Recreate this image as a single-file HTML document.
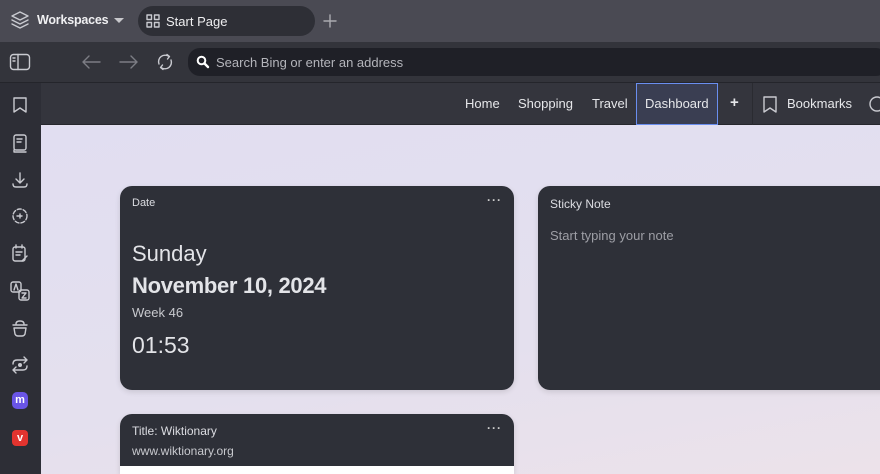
<!DOCTYPE html>
<html><head><style>
*{margin:0;padding:0;box-sizing:border-box}
html,body{width:880px;height:474px;overflow:hidden}
body{font-family:"Liberation Sans",sans-serif;background:#e3dfef;position:relative}
.abs{position:absolute}
svg{position:absolute;fill:none;stroke:#c9cad0;stroke-width:1.4;stroke-linecap:round;stroke-linejoin:round}
.card{position:absolute;background:#2e3038;border-radius:12px;color:#e3e4e8;box-shadow:0 2px 6px rgba(0,0,0,.12)}
.t{position:absolute;font-size:12px;color:#dcdde2;white-space:nowrap}
.dots{position:absolute;font-size:12px;color:#ccc;letter-spacing:1px;font-weight:bold}
.nav{position:absolute;top:96px;font-size:13px;color:#e6e7ea}
</style></head><body>
<div class="abs" style="left:0;top:0;width:880px;height:42px;background:#4a4a53"></div>
<svg style="left:10px;top:10px" width="20" height="22" viewBox="0 0 20 22"><path d="M10 2 L18 6 L10 10 L2 6Z M2 10 L10 14 L18 10 M2 14 L10 18 L18 14"/></svg>
<div class="abs" style="left:37px;top:13px;font-size:12.5px;font-weight:bold;color:#f0f0f2;letter-spacing:-0.2px">Workspaces</div>
<div class="abs" style="left:114px;top:18px;width:0;height:0;border-left:5px solid transparent;border-right:5px solid transparent;border-top:5px solid #c8c8cc"></div>
<div class="abs" style="left:138px;top:6px;width:177px;height:30px;border-radius:15px;background:#2e2f36"></div>
<svg style="left:146px;top:14px" width="14" height="14" viewBox="0 0 14 14"><rect x="1" y="1" width="4.5" height="4.5"/><rect x="8.5" y="1" width="4.5" height="4.5"/><rect x="1" y="8.5" width="4.5" height="4.5"/><rect x="8.5" y="8.5" width="4.5" height="4.5"/></svg>
<div class="abs" style="left:166px;top:14px;font-size:13px;color:#eeeef0">Start Page</div>
<svg style="left:323px;top:14px" width="14" height="14" viewBox="0 0 14 14"><path d="M7 1v12M1 7h12" stroke="#aaaab0"/></svg>
<div class="abs" style="left:0;top:42px;width:880px;height:41px;background:#33343b;border-bottom:1px solid #24252b"></div>
<svg style="left:9px;top:53px" width="22" height="18" viewBox="0 0 22 18"><rect x="1.5" y="1.5" width="19" height="15" rx="3"/><path d="M9 1.5V16.5M4 5h2M4 8h2"/></svg>
<svg style="left:80px;top:54px" width="22" height="16" viewBox="0 0 22 16"><path d="M20 8H3M9 2L3 8L9 14" stroke="#7c7d84"/></svg>
<svg style="left:118px;top:54px" width="22" height="16" viewBox="0 0 22 16"><path d="M2 8H19M13 2L19 8L13 14" stroke="#7c7d84"/></svg>
<svg style="left:155px;top:52px" width="20" height="20" viewBox="0 0 20 20"><path d="M4 12A6.5 6.5 0 0 1 14 4.5M16 8A6.5 6.5 0 0 1 6 15.5M12 2.5L14.5 4.5L12.5 7M8 17.5L5.5 15.5L7.5 13"/></svg>
<div class="abs" style="left:188px;top:48px;width:700px;height:28px;border-radius:12px;background:#1f2027"></div>
<svg style="left:196px;top:55px" width="14" height="14" viewBox="0 0 14 14"><circle cx="5.5" cy="5.5" r="3.8" stroke="#fff" stroke-width="2"/><path d="M8.5 8.5L12 12" stroke="#fff" stroke-width="2.4"/></svg>
<div class="abs" style="left:216px;top:55px;font-size:13px;color:#b4b5bb">Search Bing or enter an address</div>
<div class="abs" style="left:0;top:83px;width:41px;height:391px;background:#2d2e36"></div>
<div class="abs" style="left:41px;top:83px;width:839px;height:42px;background:#34353d;border-bottom:1px solid #26272d"></div>
<svg style="left:12px;top:96px" width="16" height="18" viewBox="0 0 16 18"><path d="M2 2H14V16L8 12L2 16Z"/></svg>
<div class="nav" style="left:465px">Home</div>
<div class="nav" style="left:518px">Shopping</div>
<div class="nav" style="left:592px">Travel</div>
<div class="abs" style="left:636px;top:83px;width:82px;height:42px;background:#3a3e52;border:1px solid #6a8eef"></div>
<div class="nav" style="left:645px">Dashboard</div>
<div class="nav" style="left:730px;font-weight:bold;font-size:15px;top:94px">+</div>
<div class="abs" style="left:752px;top:83px;width:1px;height:42px;background:#2a2b31"></div>
<svg style="left:762px;top:95px" width="16" height="20" viewBox="0 0 16 20"><path d="M2 2H14V17L8 13L2 17Z"/></svg>
<div class="nav" style="left:787px">Bookmarks</div>
<svg style="left:868px;top:95px" width="16" height="18" viewBox="0 0 16 18"><circle cx="9" cy="9" r="7"/></svg>
<svg style="left:10px;top:133px" width="20" height="22" viewBox="0 0 20 22"><rect x="4" y="2" width="12" height="15" rx="2"/><path d="M7 6h5M7 9h4M4 17v2h12"/></svg>
<svg style="left:10px;top:170px" width="20" height="20" viewBox="0 0 20 20"><path d="M10 3v10M6 9l4 4 4-4M3 14q0 3 3 3h8q3 0 3-3"/></svg>
<svg style="left:10px;top:206px" width="20" height="20" viewBox="0 0 20 20"><circle cx="10" cy="10" r="7" stroke-dasharray="4 2"/><path d="M7 10h5M10 8v4"/></svg>
<svg style="left:10px;top:243px" width="20" height="22" viewBox="0 0 20 22"><rect x="3" y="4" width="12" height="14" rx="2"/><path d="M6 2v3M12 2v3M6 9h6M6 12h4M12 18l5-5"/></svg>
<svg style="left:9px;top:280px" width="22" height="22" viewBox="0 0 22 22"><rect x="2" y="2" width="10" height="10" rx="2"/><rect x="10" y="10" width="10" height="10" rx="2"/><path d="M5 10L7 4L9 10M13 13h4l-4 5h4"/></svg>
<svg style="left:10px;top:318px" width="20" height="20" viewBox="0 0 20 20"><path d="M3 7h14M4 10h12l-1 6q-1 2-3 2H8q-2 0-3-2ZM6 6q0-3 4-3t4 3"/></svg>
<svg style="left:10px;top:355px" width="20" height="20" viewBox="0 0 20 20"><path d="M3 9q0-4 4-4h10M14 2l3 3-3 3M17 11q0 4-4 4H3M6 18l-3-3 3-3"/><circle cx="10" cy="10" r="2" fill="#c9cad0" stroke="none"/></svg>
<div class="abs" style="left:12px;top:392px;width:16px;height:17px;border-radius:5px;background:#6a55e6;color:#fff;font-size:11px;font-weight:bold;text-align:center;line-height:16px">m</div>
<div class="abs" style="left:12px;top:430px;width:16px;height:16px;border-radius:4px;background:#e3342f;color:#fff;font-size:11px;font-weight:bold;text-align:center;line-height:16px">v</div>
<div class="abs" style="left:41px;top:126px;width:839px;height:348px;background:linear-gradient(170deg,#e1def1 0%,#e4e0ee 60%,#ece2ea 100%)"></div>
<div class="card" style="left:120px;top:186px;width:394px;height:204px">
<div class="t" style="left:12px;top:11px;font-size:11px">Date</div>
<div class="dots" style="right:12px;top:7px">···</div>
<div class="t" style="left:12px;top:55px;font-size:22px;color:#e3e4e8">Sunday</div>
<div class="t" style="left:12px;top:87px;font-size:22px;font-weight:bold;color:#e3e4e8;letter-spacing:-0.3px">November 10, 2024</div>
<div class="t" style="left:12px;top:119px;font-size:13px;color:#c8c9ce">Week 46</div>
<div class="t" style="left:12px;top:146px;font-size:23px;color:#e3e4e8">01:53</div>
</div>
<div class="card" style="left:538px;top:186px;width:360px;height:204px">
<div class="t" style="left:12px;top:11px;font-size:12px">Sticky Note</div>
<div class="t" style="left:12px;top:42px;font-size:13px;color:#9d9ea5">Start typing your note</div>
</div>
<div class="card" style="left:120px;top:414px;width:394px;height:60px;overflow:hidden;border-radius:12px 12px 0 0">
<div class="t" style="left:12px;top:10px;font-size:12px">Title: Wiktionary</div>
<div class="dots" style="right:12px;top:7px">···</div>
<div class="t" style="left:12px;top:30px;font-size:12px;color:#c8c9ce">www.wiktionary.org</div>
<div class="abs" style="left:0;top:52px;width:394px;height:8px;background:#fff"></div>
</div>
</body></html>
